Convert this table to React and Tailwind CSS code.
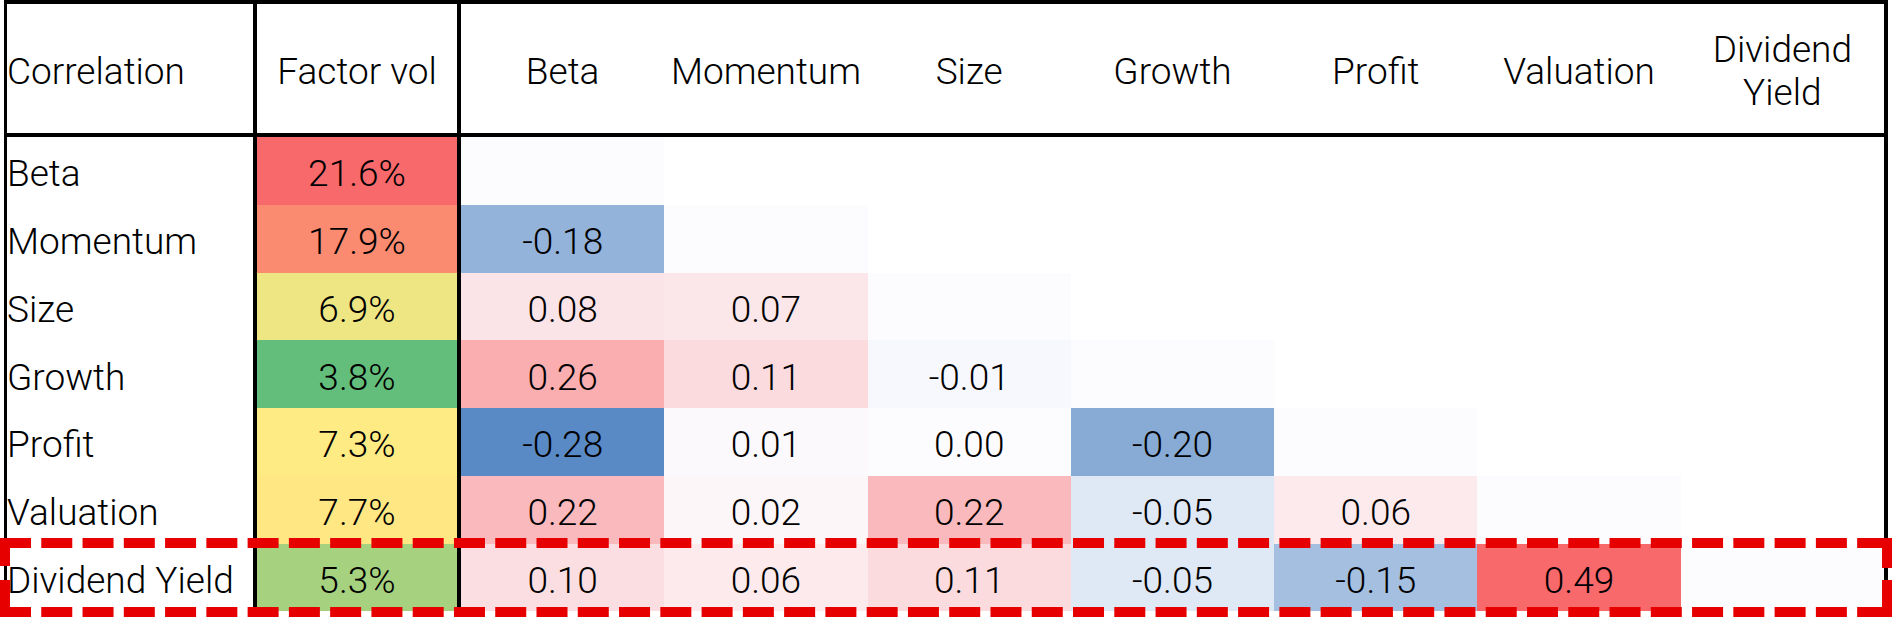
import React from "react";

const COLS = ["Beta", "Momentum", "Size", "Growth", "Profit", "Valuation", "Dividend Yield"];

const ROWS = [
  { name: "Beta", vol: "21.6%", volBg: "bg-[#F8696B]", cells: [] },
  { name: "Momentum", vol: "17.9%", volBg: "bg-[#FA8B71]", cells: [["-0.18", "bg-[#94B3DA]"]] },
  { name: "Size", vol: "6.9%", volBg: "bg-[#EDE683]", cells: [["0.08", "bg-[#FBE4E7]"], ["0.07", "bg-[#FBE7EA]"]] },
  {
    name: "Growth",
    vol: "3.8%",
    volBg: "bg-[#63BE7B]",
    cells: [["0.26", "bg-[#FAAEB0]"], ["0.11", "bg-[#FBDBDE]"], ["-0.01", "bg-[#F6F8FD]"]],
  },
  {
    name: "Profit",
    vol: "7.3%",
    volBg: "bg-[#FFEB84]",
    cells: [["-0.28", "bg-[#5A8AC6]"], ["0.01", "bg-[#FCF9FC]"], ["0.00", "bg-[#FCFCFF]"], ["-0.20", "bg-[#88ABD6]"]],
  },
  {
    name: "Valuation",
    vol: "7.7%",
    volBg: "bg-[#FFE783]",
    cells: [
      ["0.22", "bg-[#FABABD]"],
      ["0.02", "bg-[#FCF6F9]"],
      ["0.22", "bg-[#FABABD]"],
      ["-0.05", "bg-[#DFE8F5]"],
      ["0.06", "bg-[#FCEAED]"],
    ],
  },
  {
    name: "Dividend Yield",
    vol: "5.3%",
    volBg: "bg-[#A6D17F]",
    cells: [
      ["0.10", "bg-[#FBDEE1]"],
      ["0.06", "bg-[#FCEAED]"],
      ["0.11", "bg-[#FBDBDE]"],
      ["-0.05", "bg-[#DFE8F5]"],
      ["-0.15", "bg-[#A5BFE0]"],
      ["0.49", "bg-[#F8696B]"],
    ],
  },
];

function DataRow({ row, index }) {
  const cells = [];
  for (let c = 0; c < 7; c++) {
    let text = "";
    let bg = "bg-white";
    if (c < index) {
      text = row.cells[c][0];
      bg = row.cells[c][1];
    } else if (c === index) {
      bg = "bg-[#FCFCFF]";
    }
    cells.push(
      <div key={c} className={`h-[67.75px] flex items-center justify-center pt-[6px] ${bg}`}>
        {text}
      </div>
    );
  }
  return (
    <>
      <div className="h-[67.75px] flex items-center pt-[6px] border-r-4 border-black whitespace-nowrap">
        {row.name}
      </div>
      <div className={`h-[67.75px] flex items-center justify-center pt-[6px] border-r-4 border-black ${row.volBg}`}>
        {row.vol}
      </div>
      {cells}
    </>
  );
}

export default function App() {
  return (
    <div className="relative w-[1897px] h-[623px] bg-white overflow-hidden text-black [font-family:Roboto,'Liberation_Sans',sans-serif] font-light text-[37px] leading-[43px]">
      <div className="ml-[4px] w-[1884px] h-[613px] border-l-[3px] border-r-4 border-t-4 border-black grid grid-cols-[250px_204px_repeat(7,1fr)] content-start">
        <div className="h-[133px] flex items-center pt-[5px] border-r-4 border-b-4 border-black">Correlation</div>
        <div className="h-[133px] flex items-center justify-center pt-[5px] border-r-4 border-b-4 border-black">
          Factor vol
        </div>
        {COLS.map((c) => (
          <div key={c} className="h-[133px] flex items-center justify-center text-center pt-[5px] border-b-4 border-black">
            {c}
          </div>
        ))}
        {ROWS.map((r, i) => (
          <DataRow key={r.name} row={r} index={i} />
        ))}
      </div>
      <svg className="absolute left-0 top-[538px]" width="1892" height="79" viewBox="0 0 1892 79">
        <g stroke="#E60000" strokeWidth="10" fill="none">
          <line x1="0" y1="5" x2="1892" y2="5" strokeDasharray="31 10.27" />
          <line x1="0" y1="74" x2="1892" y2="74" strokeDasharray="31 10.27" />
          <line x1="5" y1="0" x2="5" y2="79" strokeDasharray="28 14 40" />
          <line x1="1887" y1="0" x2="1887" y2="79" strokeDasharray="30 12 40" />
        </g>
      </svg>
    </div>
  );
}
